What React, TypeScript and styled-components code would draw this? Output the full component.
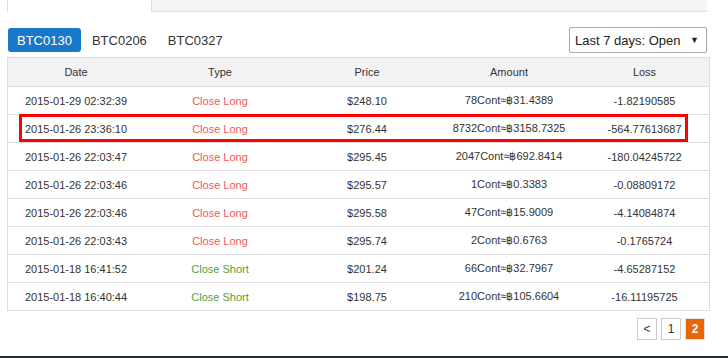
import React from 'react';
import styled, { createGlobalStyle } from 'styled-components';

const GlobalStyle = createGlobalStyle`
  html, body {
    margin: 0;
    padding: 0;
    background: #fff;
    font-family: "Liberation Sans", Arial, sans-serif;
    color: #333;
  }
`;

const Page = styled.div`
  width: 728px;
  height: 358px;
  display: flex;
  flex-direction: column;
  overflow: hidden;
`;

const Main = styled.div`
  flex: 1;
  padding: 0 21px 0 7px;
  display: flex;
  flex-direction: column;
`;

const TabStrip = styled.div`
  display: flex;
  height: 12px;
`;

const Tab = styled.div<{ $active?: boolean }>`
  box-sizing: border-box;
  height: 12px;
  width: ${(p) => (p.$active ? '144px' : 'auto')};
  flex: ${(p) => (p.$active ? 'none' : '1')};
  background: ${(p) => (p.$active ? '#fff' : '#f4f4f4')};
  border-left: 1px solid #ddd;
  border-bottom: ${(p) => (p.$active ? 'none' : '1px solid #ddd')};
  position: relative;
  overflow: hidden;
`;

const TabLabel = styled.span`
  position: absolute;
  left: 58px;
  top: -12px;
  font-size: 14px;
  line-height: 14px;
  color: #555;
`;

const Toolbar = styled.div`
  display: flex;
  align-items: center;
  justify-content: space-between;
  padding: 15px 0 4px 1px;
`;

const Pills = styled.div`
  display: flex;
  gap: 1px;
`;

const Pill = styled.button<{ $active?: boolean }>`
  font-family: "Liberation Sans", Arial, sans-serif;
  font-size: 13px;
  height: 24px;
  padding: ${(p) => (p.$active ? '0 9px' : '0 10px')};
  border: none;
  border-radius: 3px;
  background: ${(p) => (p.$active ? '#1a78c8' : 'transparent')};
  color: ${(p) => (p.$active ? '#fff' : '#333')};
  cursor: pointer;
`;

const Select = styled.div`
  box-sizing: border-box;
  width: 138px;
  height: 26px;
  border: 1px solid #a9a9a9;
  border-radius: 2px;
  display: flex;
  align-items: center;
  justify-content: space-between;
  padding: 0 7px 0 5px;
  font-size: 13px;
  color: #222;
`;

const Arrow = styled.span`
  font-size: 9px;
  color: #222;
`;

const Table = styled.table`
  width: 701px;
  border-collapse: collapse;
  border: 1px solid #ddd;
  font-size: 11px;
  table-layout: fixed;
`;

const Th = styled.th<{ $w: number }>`
  width: ${(p) => p.$w}px;
  height: 28px;
  background: #f2f2f2;
  font-weight: normal;
  color: #333;
  text-align: center;
  padding: 0;
  border-bottom: 1px solid #ddd;
`;

const Tr = styled.tr`
  height: 28px;
  border-bottom: 1px solid #ddd;
`;

const Td = styled.td<{ $color?: string; $marked?: boolean }>`
  text-align: center;
  padding: 0;
  color: ${(p) => p.$color || '#333'};
  position: ${(p) => (p.$marked ? 'relative' : 'static')};

  ${(p) =>
    p.$marked &&
    `
    &::after {
      content: '';
      position: absolute;
      left: 11px;
      top: -1px;
      width: 669px;
      height: 28px;
      box-sizing: border-box;
      border: 3px solid #f00;
      pointer-events: none;
    }
  `}
`;

const Pager = styled.div`
  display: flex;
  justify-content: flex-end;
  gap: 4px;
  padding: 7px 2px 0 0;
`;

const PageBtn = styled.div<{ $active?: boolean }>`
  box-sizing: border-box;
  width: 20px;
  height: 22px;
  border: 1px solid ${(p) => (p.$active ? '#e0e0e0' : '#ccc')};
  background: ${(p) => (p.$active ? '#e8650a' : '#fff')};
  color: ${(p) => (p.$active ? '#fff' : '#333')};
  font-size: 12px;
  font-weight: ${(p) => (p.$active ? 'bold' : 'normal')};
  display: flex;
  align-items: center;
  justify-content: center;
`;

const Footer = styled.div`
  height: 2px;
  background: #2b3035;
`;

const LONG = '#f0585a';
const SHORT = '#55a03c';

const rows = [
  ['2015-01-29 02:32:39', 'Close Long', '$248.10', '78Cont≈฿31.4389', '-1.82190585'],
  ['2015-01-26 23:36:10', 'Close Long', '$276.44', '8732Cont≈฿3158.7325', '-564.77613687'],
  ['2015-01-26 22:03:47', 'Close Long', '$295.45', '2047Cont≈฿692.8414', '-180.04245722'],
  ['2015-01-26 22:03:46', 'Close Long', '$295.57', '1Cont≈฿0.3383', '-0.08809172'],
  ['2015-01-26 22:03:46', 'Close Long', '$295.58', '47Cont≈฿15.9009', '-4.14084874'],
  ['2015-01-26 22:03:43', 'Close Long', '$295.74', '2Cont≈฿0.6763', '-0.1765724'],
  ['2015-01-18 16:41:52', 'Close Short', '$201.24', '66Cont≈฿32.7967', '-4.65287152'],
  ['2015-01-18 16:40:44', 'Close Short', '$198.75', '210Cont≈฿105.6604', '-16.11195725'],
];

const widths = [136, 152, 142, 142, 129];

const App = () => {
  return (
    <Page>
      <GlobalStyle />
      <Main>
        <TabStrip>
          <Tab $active />
          <Tab>
            <TabLabel>LTC</TabLabel>
          </Tab>
        </TabStrip>
        <Toolbar>
          <Pills>
            <Pill $active>BTC0130</Pill>
            <Pill>BTC0206</Pill>
            <Pill>BTC0327</Pill>
          </Pills>
          <Select>
            Last 7 days: Open
            <Arrow>▼</Arrow>
          </Select>
        </Toolbar>
        <Table>
          <thead>
            <tr>
              {['Date', 'Type', 'Price', 'Amount', 'Loss'].map((h, i) => (
                <Th key={h} $w={widths[i]}>{h}</Th>
              ))}
            </tr>
          </thead>
          <tbody>
            {rows.map((r, i) => (
              <Tr key={i}>
                {r.map((c, j) => (
                  <Td
                    key={j}
                    $marked={i === 1 && j === 0}
                    $color={j === 1 ? (c === 'Close Long' ? LONG : SHORT) : undefined}
                  >
                    {c}
                  </Td>
                ))}
              </Tr>
            ))}
          </tbody>
        </Table>
        <Pager>
          <PageBtn>&lt;</PageBtn>
          <PageBtn>1</PageBtn>
          <PageBtn $active>2</PageBtn>
        </Pager>
      </Main>
      <Footer />
    </Page>
  );
};

export default App;
